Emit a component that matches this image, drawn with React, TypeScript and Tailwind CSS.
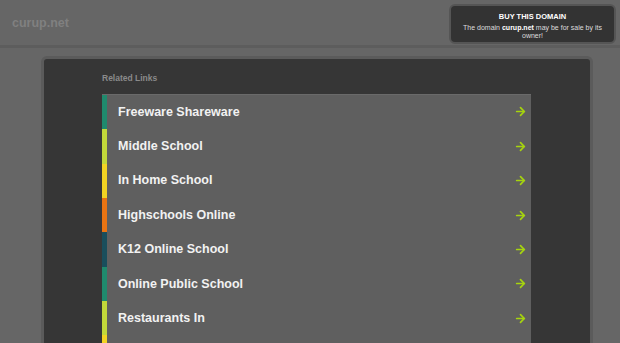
import { ArrowRight } from "lucide-react";

const LINKS = [
  { title: "Freeware Shareware", color: "bg-[#1f8a6d]" },
  { title: "Middle School", color: "bg-[#c2d83a]" },
  { title: "In Home School", color: "bg-[#f2d423]" },
  { title: "Highschools Online", color: "bg-[#ea7412]" },
  { title: "K12 Online School", color: "bg-[#194e5c]" },
  { title: "Online Public School", color: "bg-[#1f8a6d]" },
  { title: "Restaurants In", color: "bg-[#c2d83a]" },
  { title: "Online Schools", color: "bg-[#f2d423]" },
];

export default function App() {
  return (
    <div className="h-[343px] w-[620px] overflow-hidden bg-[#666666] font-['Liberation_Sans',Arial,sans-serif]">
      {/* Header */}
      <header className="flex h-[48px] items-start justify-between border-b-[3px] border-[#5d5d5d]">
        <div className="pl-[12px] pt-[14px] text-[12.5px] font-bold text-[#808080]">curup.net</div>
        <div className="mr-[4px] mt-[4px] flex h-[40px] w-[167px] flex-col items-center rounded-[6px] border-[2px] border-[#555555] bg-[#333333] pt-[7px] text-center leading-[8.5px]">
          <div className="text-[7.5px] font-bold text-white">BUY THIS DOMAIN</div>
          <div className="mt-[2px] px-[10px] text-[7px] text-[#dddddd]">
            The domain <span className="font-bold text-white">curup.net</span> may be for sale by its owner!
          </div>
        </div>
      </header>

      {/* Main panel */}
      <div className="ml-[41px] mt-[8px] w-[552px] rounded-[6px] border-[3px] border-[#5b5b5b] bg-[#363636] pb-4">
        <div className="pl-[58px] pt-[13px]">
          <div className="text-[8.5px] font-bold text-[#8a8a8a]">Related Links</div>
          <ul className="mt-[9px] w-[429px] border-t border-[#6a6a6a] bg-[#5f5f5f]">
            {LINKS.map((link) => (
              <li key={link.title} className="flex h-[34.4px] items-center">
                <div className={`h-full w-[5px] ${link.color}`} />
                <span className="ml-[11px] flex-1 text-[12.5px] font-bold text-[#f2f2f2]">{link.title}</span>
                <ArrowRight className="mr-[4px] h-[13px] w-[13px] text-[#a6d40e]" strokeWidth={3.2} />
              </li>
            ))}
          </ul>
        </div>
      </div>
    </div>
  );
}
